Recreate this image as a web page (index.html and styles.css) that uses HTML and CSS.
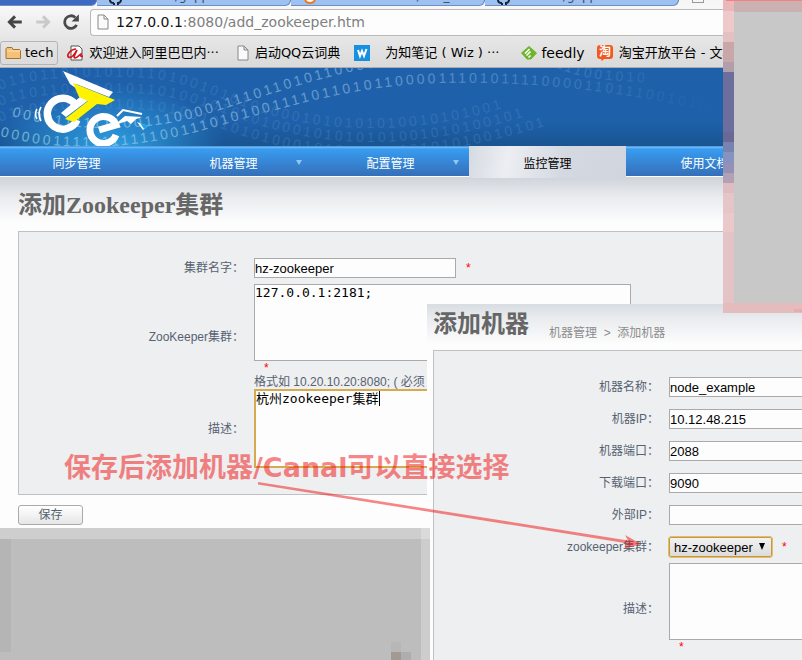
FILE: index.html
```html
<!DOCTYPE html>
<html lang="zh-CN">
<head>
<meta charset="utf-8">
<title>添加Zookeeper集群</title>
<link rel="stylesheet" href="styles.css">
</head>
<body>
<div class="screen">
  <div class="tabs">
    <div class="tab tab-dark"></div>
    <div class="tab"><svg class="tab-icon" viewBox="0 0 14 6"><path d="M1 0c0 2 2 3 4 3M12 0c0 1-1 3-3 3v2M5 3v2" stroke="#1b2530" stroke-width="2" fill="none"/></svg><span class="tab-text">alibaba/gapp</span></div>
    <div class="tab"><svg class="tab-icon" viewBox="0 0 14 6"><path d="M2 0c2 4 8 4 10 0" stroke="#f07a22" stroke-width="2" fill="#fff"/></svg><span class="tab-text">127.0.0.1:8080/add_</span></div>
    <div class="tab"><svg class="tab-icon" viewBox="0 0 14 6"><path d="M1 0c0 2 2 3 4 3M12 0c0 1-1 3-3 3v2M5 3v2" stroke="#1b2530" stroke-width="2" fill="none"/></svg><span class="tab-text">alibaba/gapp</span></div>
    <div class="tab-new"></div>
  </div>
  <div class="toolbar">
    <button class="tool" type="button" aria-label="后退"><svg viewBox="0 0 16 16"><path d="M14 8H3M8 3L3 8l5 5" fill="none" stroke="#444" stroke-width="2.6"/></svg></button>
    <button class="tool" type="button" aria-label="前进"><svg viewBox="0 0 16 16"><path d="M2 8h11M8 3l5 5-5 5" fill="none" stroke="#c9c9c9" stroke-width="2.6"/></svg></button>
    <button class="tool" type="button" aria-label="刷新"><svg viewBox="0 0 16 16"><path d="M13 10.500A5.600 5.600 0 1 1 11.800 4" fill="none" stroke="#4a4a4a" stroke-width="2.500"/><path d="M15 1v6.500H8.500z" fill="#4a4a4a"/></svg></button>
    <div class="address"><svg class="doc" viewBox="0 0 12 16"><path d="M1 1h6l4 4v10H1zM7 1v4h4" fill="#fafafa" stroke="#888"/></svg><span class="url"><b>127.0.0.1</b>:8080/add_zookeeper.htm</span></div>
  </div>
  <div class="bookmarks">
    <a class="bm bm-folder" href="#"><svg viewBox="0 0 16 16"><path d="M1 13.500v-10l1-1h5l1 2h6.500l1 1v8z" fill="#f5c27a" stroke="#a8702a"/><path d="M2 6h13" stroke="#fbe0b4"/></svg>tech</a>
    <a class="bm bm-ali" href="#"><svg viewBox="0 0 16 16"><path d="M4 1h8l3 3v11H4z" fill="#fff" stroke="#555"/><path d="M9 4C4 4-1 10 1.500 12S8 9 10 5c-2 4-4 8-2 8s4-3 6-4c0 2-1 3 2 2" fill="none" stroke="#d8141c" stroke-width="1.700"/></svg>欢迎进入阿里巴巴内···</a>
    <a class="bm bm-qq" href="#"><svg class="doc" viewBox="0 0 12 16"><path d="M1 1h6l4 4v10H1zM7 1v4h4" fill="#fafafa" stroke="#888"/></svg>启动QQ云词典</a>
    <a class="bm bm-wiz" href="#"><svg viewBox="0 0 16 16"><path d="M0 0h16v16H0z" fill="#1690e0"/><path d="M4 5l2 6 2-5 2 5 2.500-7" fill="none" stroke="#fff" stroke-width="2"/></svg>为知笔记 ( Wiz ) ···</a>
    <a class="bm bm-feedly" href="#"><svg viewBox="0 0 16 16"><path d="M8 1.500L15.500 8 10 14H6L.5 8z" fill="#6db52c" stroke="#6db52c" stroke-linejoin="round"/><path d="M4 8.500L8.500 4M5.500 10.500l4-4M7.500 12.500l2-2" stroke="#fff" stroke-width="1.600"/></svg>feedly</a>
    <a class="bm bm-tao" href="#"><svg viewBox="0 0 16 16"><path d="M3 0h10q3 0 3 3v8q0 3-3 3H7l-2 2-1-2H3q-3 0-3-3V3q0-3 3-3z" fill="#f4581c"/><text x="2" y="11" class="tao-glyph">淘</text></svg>淘宝开放平台 - 文档</a>
  </div>
  <header class="banner">
    <svg class="banner-art" viewBox="0 0 802 78" preserveAspectRatio="xMinYMin slice" aria-hidden="true">
      <defs>
        <radialGradient id="glow" cx="110" cy="84" r="115" gradientUnits="userSpaceOnUse" gradientTransform="matrix(1 0 0 .6 0 34)"><stop offset="0" stop-color="#2fa4e8"/><stop offset="1" stop-color="#2fa4e8" stop-opacity="0"/></radialGradient>
        <linearGradient id="fade" x1="0" x2="720" y1="0" y2="0" gradientUnits="userSpaceOnUse"><stop offset="0" stop-color="#a8e0ea" stop-opacity=".6"/><stop offset=".55" stop-color="#a8c8ea" stop-opacity=".5"/><stop offset=".8" stop-color="#8db8e4" stop-opacity=".25"/><stop offset="1" stop-color="#8db8e4" stop-opacity="0"/></linearGradient>
        <path id="wave1" d="M0 68C60 84 130 82 200 63S350 17 440 15S620 22 720 46"/>
        <path id="wave2" d="M12 48C60 62 140 66 200 48S300 15 350 4S520-16 560 1S640 10 700 20"/>
        <path id="wave3" d="M0 22C30 8 90 8 130 9S190 18 220 30S300 60 370 60S500 44 560 20"/>
        <path id="wave4" d="M0 38C30 24 90 24 130 25S190 34 220 44S300 74 370 74S500 58 580 30"/>
        <path id="wave5" d="M0 54C30 40 90 40 130 41S190 50 220 60S300 88 370 88S500 72 600 42"/>
      </defs>
      <rect width="802" height="78" fill="url(#glow)"/>
      <g class="bits" fill="url(#fade)">
        <text><textPath href="#wave1">00000111111111110011101010011110110101100001110101111000011011100101010</textPath></text>
        <text><textPath href="#wave2">00001111111001110000111101101011000011101011110000110111001010</textPath></text>
      </g>
      <g class="bits bits-dim">
        <text><textPath href="#wave3">011011010101011010010101010001010101010010101001</textPath></text>
        <text><textPath href="#wave4">01101101010101101001010101000101010101001010100101</textPath></text>
        <text><textPath href="#wave5">0110110101010110100101010100010101010100101010010101</textPath></text>
      </g>
      <g class="logo">
        <path d="M41 39q-4 7 0 14M37 41q-3 5 0 10" fill="none" stroke="#fff" stroke-width="1.600"/>
        <path d="M75 36A15.500 15.500 0 1 0 77 52" fill="none" stroke="#fff" stroke-width="7.500"/>
        <path d="M61 45l19-16h9l1 2-24 18z" fill="#fff"/>
        <path d="M63 3l50 21-4 5-33-13 1 5-7-5z" fill="#fff"/>
        <path d="M73 15l42 17-9 5-9-1-23 18-9-3 23-18-9-4z" fill="#fff200"/>
        <path d="M116 67A13.500 13.500 0 1 1 116 57L99 62" fill="none" stroke="#fff" stroke-width="7"/>
        <path d="M118 54l7-6 17 1-6 2-5 5-4-3-9 3z" fill="#fff"/><path d="M117 48l6-6 19 4" stroke="#fff" stroke-width="2" fill="none"/>
        <path d="M137 54l11 4-5 4z" fill="#fff"/><path d="M140 55l9 3-5 3z" fill="#21a4e8"/>
      </g>
    </svg>
  </header>
  <nav class="nav">
    <a href="#">同步管理</a>
    <a href="#" class="has-menu">机器管理</a>
    <a href="#" class="has-menu">配置管理</a>
    <a href="#" class="active">监控管理</a>
    <a href="#">使用文档</a>
  </nav>
  <main class="page">
    <h1>添加Zookeeper集群</h1>
    <form>
      <div class="box">
        <div class="row tight"><label for="cname">集群名字：</label><div class="cell"><input id="cname" type="text" value="hz-zookeeper"><span class="req">*</span></div></div>
        <div class="row flush"><label for="czk">ZooKeeper集群：</label><div class="cell stacked"><textarea id="czk">127.0.0.1:2181;</textarea><span class="req">*</span><span class="hint">格式如 10.20.10.20:8080; ( 必须</span></div></div>
        <div class="row flush"><label for="cdesc">描述：</label><div class="cell stacked focused"><textarea id="cdesc">杭州zookeeper集群</textarea></div></div>
      </div>
      <button class="save" type="submit">保存</button>
    </form>
  </main>
  <div class="mosaic-bottom"></div>
  <section class="machine">
    <div class="machine-head"><h2>添加机器</h2><span class="crumb">机器管理 &nbsp;&gt;&nbsp; 添加机器</span></div>
    <form class="box">
      <div class="row"><label for="mname">机器名称：</label><div class="cell"><input id="mname" type="text" value="node_example"></div></div>
      <div class="row"><label for="mip">机器IP：</label><div class="cell"><input id="mip" type="text" value="10.12.48.215"></div></div>
      <div class="row"><label for="mport">机器端口：</label><div class="cell"><input id="mport" type="text" value="2088"></div></div>
      <div class="row"><label for="dport">下载端口：</label><div class="cell"><input id="dport" type="text" value="9090"></div></div>
      <div class="row"><label for="eip">外部IP：</label><div class="cell"><input id="eip" type="text" value=""></div></div>
      <div class="row tight"><label for="mzk">zookeeper集群：</label><div class="cell"><span class="pick"><select id="mzk"><option>hz-zookeeper</option></select></span><span class="req">*</span></div></div>
      <div class="row"><label for="mdesc">描述：</label><div class="cell stacked"><textarea id="mdesc"></textarea><span class="req">*</span></div></div>
    </form>
  </section>
  <div class="mosaic-side"></div>
  <p class="note">保存后添加机器/Canal可以直接选择</p>
  <svg class="arrow" viewBox="0 0 384 80" aria-hidden="true"><path d="M1 9L371 67.500 368 62l16 9-17 5 4-5.500L1 11.500z" fill="#f01010"/></svg>
</div>
</body>
</html>
```
FILE: styles.css
```css
* { box-sizing: border-box; }

body {
  margin: 0;
  overflow: hidden;
  background: #fdfdfd;
  color: #566270;
  font: 12px/16px "Liberation Sans", "Noto Sans CJK SC", sans-serif;
}

.screen { position: relative; min-height: 100vh; overflow: hidden; }

/* Browser chrome */
.tabs {
  display: flex;
  height: 6px;
  overflow: hidden;
  background: #f6f6f6;
}
.tab {
  display: flex;
  width: 194px;
  gap: 8px;
  padding-left: 12px;
  background: #9cc1f2;
  border-right: 1px solid #5f7fab;
  border-bottom: 1px solid #6f8fbc;
  border-bottom-right-radius: 6px;
}
.tab-dark { width: 97px; background: #3c69c2; }
.tab-icon { width: 14px; height: 6px; }
.tab-text { margin-top: -11px; font: 12px/14px "DejaVu Sans", sans-serif; color: #3b4a5c; }
.tab-new { width: 12px; height: 3px; margin-left: 13px; border: 1px solid #999; border-top: 0; }

.toolbar {
  display: flex;
  align-items: center;
  height: 32px;
  padding-left: 6px;
  gap: 9px;
  background: linear-gradient(#f8f8f8, #e6e6e6);
}
.tool { width: 19px; height: 18px; padding: 0; border: 0; background: none; }
.tool svg { display: block; width: 18px; height: 18px; }
.address {
  display: flex;
  flex: 1;
  align-items: center;
  height: 27px;
  gap: 7px;
  padding-left: 6px;
  background: #fdfdfd;
  border: 1px solid #b9b9b9;
  border-right: 0;
  border-radius: 4px 0 0 4px;
}
.doc { width: 12px; height: 16px; flex: none; }
.url { color: #808080; font: 14px/20px "DejaVu Sans", sans-serif; }
.url b { color: #111; font-weight: normal; }

.bookmarks {
  display: flex;
  align-items: center;
  height: 30px;
  overflow: hidden;
  white-space: nowrap;
  background: linear-gradient(#e6e6e6, #dadada);
  border-bottom: 1px solid #a6adb5;
}
.bm {
  display: flex;
  flex: none;
  align-items: center;
  gap: 6px;
  color: #000;
  font: 13px/20px "DejaVu Sans", "Noto Sans CJK SC", sans-serif;
  text-decoration: none;
}
.bm svg { width: 16px; height: 16px; flex: none; }
.bm svg.doc { width: 12px; }
.bm-folder { height: 24px; gap: 4px; padding: 0 4px; border: 1px solid #b4b4b4; border-radius: 3px; }
.bm-ali { margin-left: 9px; }
.bm-qq { margin-left: 18px; }
.bm-wiz { margin-left: 14px; gap: 15px; }
.bm-feedly { margin-left: 22px; gap: 4px; font-size: 14px; }
.bm-tao { margin-left: 12px; }
.tao-glyph { fill: #fff; font: bold 12px "Noto Sans CJK SC", sans-serif; }

/* Site header */
.banner { height: 78px; background: linear-gradient(#1e60a9 70%, #195492); overflow: hidden; }
.banner-art { display: block; width: 100%; height: 78px; }
.bits { font: 14px "Liberation Sans", sans-serif; letter-spacing: 3px; }
.bits-dim { fill: #7aaee4; opacity: .2; }

.nav {
  display: flex;
  height: 31px;
  margin-left: -2px;
  background: linear-gradient(#2a7fd0 0, #7cc0f8 1px, #389cf0 3px, #356fb9 30px, #fdfdfd 30px);
}
.nav a {
  position: relative;
  flex: none;
  width: 157px;
  color: #fff;
  line-height: 36px;
  text-align: center;
  text-decoration: none;
}
.nav .active { height: 32px; color: #000; background: linear-gradient(100deg, #d5dae2, #eceef2 25%, #d4d9e1 60%, #d0d5de); }
.has-menu::after {
  content: "";
  position: absolute;
  top: 14px;
  right: 10px;
  border: 3px solid transparent;
  border-top: 5px solid #8fc8f6;
  border-bottom: 0;
}

/* Forms */
.page { padding: 0 0 0 18px; background: linear-gradient(#cfd4db, #e9ebee 20px, #fdfdfd 46px); }
h1, h2 { margin: 0; color: #666; font: bold 24px/28px "Liberation Serif", "Noto Sans CJK SC", sans-serif; }
h1 { padding: 14px 0 12px; }
.box { padding: 26px 0 26px; background: #eeeff1; border: 1px solid #bfc2c5; border-right: 0; }
.row { display: grid; grid-template-columns: 225px 1fr; column-gap: 10px; align-items: center; margin-bottom: 12px; }
.row.tight { margin-bottom: 6px; }
.row.flush { margin-bottom: 0; }
.row label { text-align: right; }
.cell { display: flex; align-items: center; gap: 10px; }
.cell.stacked { position: relative; flex-direction: column; align-items: flex-start; gap: 0; }
input {
  width: 202px;
  height: 20px;
  padding: 0;
  border: 1px solid #aaa;
  background: #fdfdfd;
  color: #000;
  font: 13px "Liberation Sans", sans-serif;
}
textarea {
  display: block;
  width: 377px;
  height: 77px;
  padding: 0;
  border: 1px solid #aaa;
  background: #fdfdfd;
  color: #000;
  font: 13px/15px "DejaVu Sans Mono", "Noto Sans CJK SC", monospace;
  resize: none;
  overflow: hidden;
}
.focused textarea { height: 79px; border: 2px solid #d5aa50; }
.focused::after { content: ""; position: absolute; left: 125px; top: 2px; width: 1px; height: 15px; background: #000; }
.req { color: #f00; line-height: 14px; }
.stacked .req { margin-left: 10px; }
.hint { line-height: 14px; }
.save {
  display: block;
  width: 65px;
  height: 20px;
  margin: 10px 0 3px;
  padding: 0;
  border: 1px solid #aaa;
  border-radius: 3px;
  background: linear-gradient(#fff, #e6e6e6);
  color: #566270;
  font: 12px/16px "Liberation Sans", "Noto Sans CJK SC", sans-serif;
}

/* Pixelated patches */
.mosaic-bottom {
  position: relative;
  z-index: 1;
  width: 430px;
  height: 132px;
  background:
    linear-gradient(#a19a94, #a19a94) 391px 124px / 10px 10px no-repeat,
    linear-gradient(#adafad, #adafad) 401px 124px / 10px 10px no-repeat,
    linear-gradient(#b6b7b6, #b6b7b6) 391px 114px / 10px 10px no-repeat,
    linear-gradient(#dadada, #dadada) 421px 0 / 9px 11px no-repeat,
    linear-gradient(#cdcdcd, #cdcdcd) 421px 11px / 9px 121px no-repeat,
    linear-gradient(#cecece, #cecece) 0 0 / 421px 11px no-repeat,
    linear-gradient(#b5b5b5, #b5b5b5) 0 11px / 11px 113px no-repeat,
    #bdbdbd;
}
.mosaic-side {
  position: absolute;
  top: 0;
  right: 0;
  width: 79px;
  height: 313px;
  background:
    linear-gradient(#f97e80, #f97e80) 3px 0 / 76px 1px no-repeat,
    linear-gradient(#e4aeb0, #e4aeb0) 71px 309px / 8px 3px no-repeat,
    linear-gradient(#e4bcbe, #e4bcbe) 0 303px / 79px 10px no-repeat,
    linear-gradient(#cab2b2, #cab2b2) 11px 1px / 68px 11px no-repeat,
    linear-gradient(#c8c8c8, #c8c8c8) 11px 12px / 68px 291px no-repeat,
    linear-gradient(#e8b8ba 11px, #edc9ca 11px 32px, #e3c1c1 32px 42px, #c9a7a8 42px 62px, #b29eab 62px 72px, #6c6f9e 72px 132px, #6c6895 132px 142px, #7884b0 142px 152px, #8692c0 152px 163px, #9590b5 163px 173px, #b1a1b5 173px 183px, #dfbcc0 183px 193px, #e6c5c8 193px 213px, #ebc9cb 213px 232px, #e3c3c6 232px);
}

/* Second window laid over the first */
.machine {
  position: absolute;
  top: 304px;
  left: 427px;
  right: 0;
  padding-left: 6px;
  background: linear-gradient(#d8dde2, #e9ebee 14px, #fdfdfd 40px);
}
.machine-head { display: flex; height: 46px; gap: 20px; padding-top: 6px; }
.machine .box { height: 320px; overflow: hidden; }
.crumb { padding-top: 15px; color: #8c8c8c; }
.pick { position: relative; display: flex; }
.pick::after {
  content: "";
  position: absolute;
  top: 6px;
  right: 7px;
  border: 3px solid transparent;
  border-top: 7px solid #000;
  border-bottom: 0;
}
select {
  appearance: none;
  width: 103px;
  height: 20px;
  padding: 0 4px;
  border: 1px solid #c99a3c;
  border-radius: 2px;
  outline: 1px solid #e2bd6c;
  background: linear-gradient(#f2f2f2, #dcdcdc);
  color: #000;
  font: 13px "Liberation Sans", sans-serif;
}

/* Annotation */
.note {
  position: absolute;
  z-index: 2;
  top: 452px;
  left: 64px;
  margin: 0;
  color: #f01010;
  opacity: .5;
  font: bold 27px/32px "DejaVu Sans", "Noto Sans CJK SC", sans-serif;
  white-space: nowrap;
}
.arrow { position: absolute; z-index: 2; top: 473px; left: 257px; width: 384px; height: 80px; opacity: .5; }
```
